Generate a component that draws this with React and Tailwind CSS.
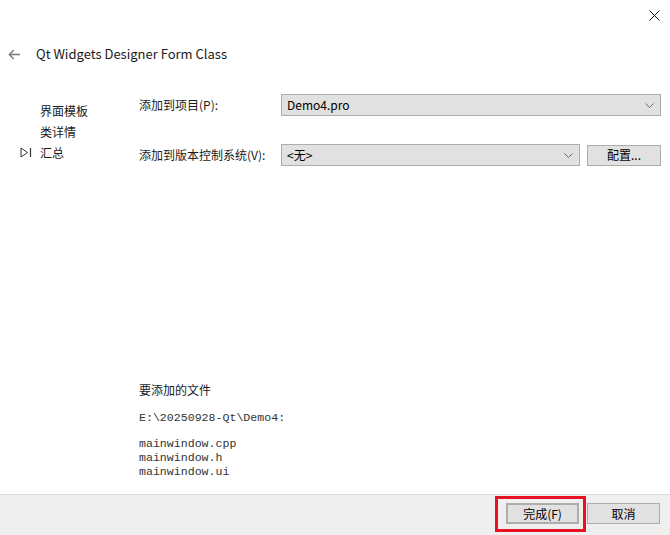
import React from 'react';

const sans = { fontFamily: '"Noto Sans CJK SC", "Noto Sans", sans-serif' };

const Chevron = () => (
  <svg width="9" height="5" viewBox="0 0 9 5" className="shrink-0">
    <path d="M0.5 0.5 L4.5 4.5 L8.5 0.5" fill="none" stroke="#5a5a5a" strokeWidth="0.9" />
  </svg>
);

const Combo = ({ value, className }) => (
  <div className={`h-[22px] bg-[#e1e1e1] border border-[#adadad] flex items-center justify-between pl-[5px] pr-[6px] text-[12px] text-black ${className}`}>
    <span>{value}</span>
    <Chevron />
  </div>
);

const PushButton = ({ children, className = '' }) => (
  <div className={`h-[21px] w-[73px] bg-[#e1e1e1] border border-[#adadad] flex items-center justify-center text-[12px] text-black ${className}`}>
    {children}
  </div>
);

export default function App() {
  return (
    <div className="w-[670px] h-[535px] bg-white flex flex-col overflow-hidden" style={sans}>
      <div className="h-[30px] flex justify-end items-center pr-[10px]">
        <svg width="11" height="11" viewBox="0 0 11 11">
          <path d="M0.5 0.5 L10.5 10.5 M10.5 0.5 L0.5 10.5" stroke="#111" strokeWidth="1" />
        </svg>
      </div>

      <div className="h-[48px] flex items-center">
        <svg width="13" height="11" viewBox="0 0 13 11" className="ml-[8px]">
          <path d="M12 5.5 H1.5 M5.8 1 L1.3 5.5 L5.8 10" fill="none" stroke="#7a7a7a" strokeWidth="1.4" />
        </svg>
        <span className="ml-[15px] text-[13px] text-[#1a1a1a]">Qt Widgets Designer Form Class</span>
      </div>

      <div className="flex-1 flex">
        <div className="w-[139px] pt-[22px] flex flex-col">
          {['界面模板', '类详情', '汇总'].map((t, i) => (
            <div key={t} className="h-[21px] flex items-center text-[12px] text-[#1a1a1a]">
              <div className="w-[40px] flex justify-end pr-[8px]">
                {i === 2 && (
                  <svg width="12" height="11" viewBox="0 0 12 11">
                    <path d="M1 1 L7.5 5.5 L1 10 Z" fill="none" stroke="#333" strokeWidth="1" />
                    <path d="M10.5 1 V10" stroke="#333" strokeWidth="1.2" />
                  </svg>
                )}
              </div>
              <span>{t}</span>
            </div>
          ))}
        </div>

        <div className="flex-1 flex flex-col pt-[16px] pr-[9px] pb-[15px]">
          <div className="flex items-center">
            <div className="w-[142px] text-[12px] text-[#1a1a1a]">添加到项目(P):</div>
            <Combo value="Demo4.pro" className="flex-1" />
          </div>
          <div className="flex items-center mt-[28px]">
            <div className="w-[142px] text-[12px] text-[#1a1a1a]">添加到版本控制系统(V):</div>
            <Combo value="<无>" className="w-[299px]" />
            <PushButton className="ml-[7px] flex-1">配置...</PushButton>
          </div>

          <div className="mt-auto">
            <div className="text-[12px] text-[#1a1a1a] leading-[18px]">要添加的文件</div>
            <div
              className="mt-[12px] text-[11.6px] leading-[14px] text-[#333]"
              style={{ fontFamily: '"Liberation Mono", monospace' }}
            >
              <div>E:\20250928-Qt\Demo4:</div>
              <div className="h-[12px]" />
              <div>mainwindow.cpp</div>
              <div>mainwindow.h</div>
              <div>mainwindow.ui</div>
            </div>
          </div>
        </div>
      </div>

      <div className="h-[41px] bg-[#efefef] border-t border-[#dcdcdc] flex justify-end items-start pt-[8px] pr-[10px] gap-[8px]">
        <div className="relative">
          <PushButton className="border-2 border-[#0078d7]">完成(F)</PushButton>
          <div className="absolute -left-[11px] -top-[7px] w-[91px] h-[36px] border-[3px] border-[#e81123]" />
        </div>
        <PushButton>取消</PushButton>
      </div>
    </div>
  );
}
